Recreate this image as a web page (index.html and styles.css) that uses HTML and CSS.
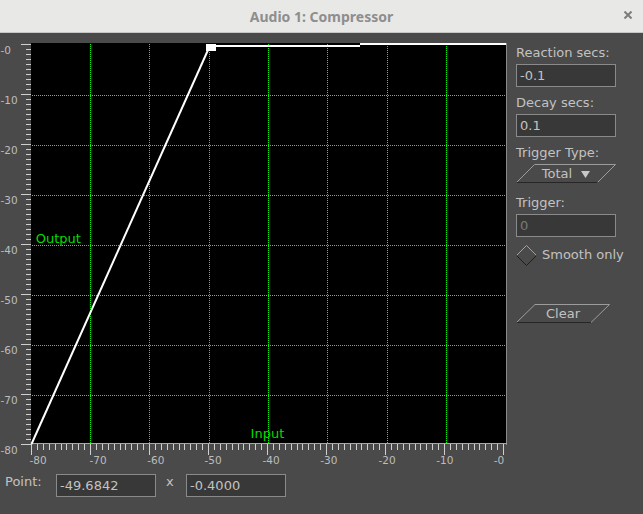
FILE: index.html
```html
<!DOCTYPE html>
<html>
<head>
<meta charset="utf-8">
<title>Audio 1: Compressor</title>
<link rel="stylesheet" href="styles.css">
</head>
<body>
<div class="titlebar">
  <div class="title">Audio 1: Compressor</div>
  <svg class="close" width="8" height="8" viewBox="0 0 8 8"><path d="M0.5 0.5L7.5 7.5M7.5 0.5L0.5 7.5" stroke="#7c7c7c" stroke-width="2"/></svg>
</div>
<div class="main">
  <svg class="plot" width="516" height="437" viewBox="0 33 516 437">
    <defs>
      <pattern id="hdot" x="0" y="0" width="2" height="1" patternUnits="userSpaceOnUse">
        <rect x="0" y="0" width="1" height="1" fill="#00ff00"/>
      </pattern>
      <pattern id="vdot" x="0" y="0" width="1" height="2" patternUnits="userSpaceOnUse">
        <rect x="0" y="0" width="1" height="1" fill="#00ff00"/>
      </pattern>
      <g id="xt">
        <path d="M0.5 444v11M6.4 444v5.5M12.3 444v5.5M18.2 444v5.5M24.1 444v5.5M30 444v5.5M35.9 444v5.5M41.8 444v5.5M47.7 444v5.5M53.6 444v5.5"/>
      </g>
      <g id="yt">
        <path d="M21 0.5h10M26 5.5h5M26 10.5h5M26 15.5h5M26 20.5h5M26 25.5h5M26 30.5h5M26 35.5h5M26 40.5h5M26 45.5h5"/>
      </g>
    </defs>
    <rect x="31" y="43" width="475" height="401" fill="#000"/>
    <g fill="url(#hdot)" shape-rendering="crispEdges">
      <rect x="31" y="95" width="475" height="1"/>
      <rect x="31" y="145" width="475" height="1"/>
      <rect x="31" y="195" width="475" height="1"/>
      <rect x="31" y="245" width="475" height="1"/>
      <rect x="31" y="295" width="475" height="1"/>
      <rect x="31" y="345" width="475" height="1"/>
      <rect x="31" y="395" width="475" height="1"/>
    </g>
    <g fill="url(#vdot)" shape-rendering="crispEdges">
      <rect x="90" y="43" width="1" height="401"/>
      <rect x="149" y="43" width="1" height="401"/>
      <rect x="209" y="43" width="1" height="401"/>
      <rect x="268" y="43" width="1" height="401"/>
      <rect x="327" y="43" width="1" height="401"/>
      <rect x="387" y="43" width="1" height="401"/>
      <rect x="446" y="43" width="1" height="401"/>
    </g>
    <path d="M506.5 43V444.5" stroke="#8a8a8a" shape-rendering="crispEdges"/>
    <path d="M31 443.5H507" stroke="#a8a8a8" shape-rendering="crispEdges"/>
    <g stroke="#cfcfcf" shape-rendering="crispEdges" fill="none">
      <use href="#xt" x="31"/>
      <use href="#xt" x="90"/>
      <use href="#xt" x="149"/>
      <use href="#xt" x="208"/>
      <use href="#xt" x="267"/>
      <use href="#xt" x="326"/>
      <use href="#xt" x="385"/>
      <use href="#xt" x="444"/>
      <path d="M503.5 444v11"/>
      <use href="#yt" y="44"/>
      <use href="#yt" y="94"/>
      <use href="#yt" y="144"/>
      <use href="#yt" y="194"/>
      <use href="#yt" y="244"/>
      <use href="#yt" y="294"/>
      <use href="#yt" y="344"/>
      <use href="#yt" y="394"/>
      <path d="M21 444.5h10"/>
    </g>
    <g class="axis-text">
      <text x="0.5" y="54">-0</text>
      <text x="0.5" y="104">-10</text>
      <text x="0.5" y="154">-20</text>
      <text x="0.5" y="204">-30</text>
      <text x="0.5" y="254">-40</text>
      <text x="0.5" y="304">-50</text>
      <text x="0.5" y="354">-60</text>
      <text x="0.5" y="404">-70</text>
      <text x="0.5" y="454">-80</text>
      <text x="29.5" y="464">-80</text>
      <text x="89.5" y="464">-70</text>
      <text x="147.2" y="464">-60</text>
      <text x="204.5" y="464">-50</text>
      <text x="262.5" y="464">-40</text>
      <text x="320.2" y="464">-30</text>
      <text x="378.5" y="464">-20</text>
      <text x="436.2" y="464">-10</text>
      <text x="493.8" y="464">-0</text>
    </g>
    <path d="M31.5 444L208 50" stroke="#fff" stroke-width="2"/>
    <rect x="206" y="44" width="10" height="7" fill="#fff"/>
    <rect x="216" y="45" width="144" height="2" fill="#fff"/>
    <rect x="360" y="43" width="146" height="2" fill="#fff"/>
    <text class="green-text" x="35.8" y="243">Output</text>
    <text class="green-text" x="250.6" y="438">Input</text>
  </svg>
  <div class="panel">
    <div class="label">Reaction secs:</div>
    <div class="field">-0.1</div>
    <div class="label gap8">Decay secs:</div>
    <div class="field">0.1</div>
    <div class="label gap8">Trigger Type:</div>
    <div class="pbtn pbtn-total">
      <svg class="pbtn-shape" width="100" height="19" viewBox="0 0 100 19"><path d="M0.5 18.5L18.5 0.5H99.5L81.5 18.5" stroke="#9c9c9c" fill="none"/><path d="M0.5 18.5H81.5" stroke="#262626"/></svg>
      <div class="pbtn-text">Total<svg class="arrow" width="9" height="7" viewBox="0 0 9 7"><path d="M0 0H9L4.5 7Z" fill="#c8c8c8"/></svg></div>
    </div>
    <div class="label gap12">Trigger:</div>
    <div class="field disabled">0</div>
    <div class="check">
      <svg width="21" height="21" viewBox="0 0 21 21"><path d="M0.5 10.5L10.5 0.5L20.5 10.5" stroke="#a2a2a2" fill="none"/><path d="M20.5 10.5L10.5 20.5L0.5 10.5" stroke="#1e1e1e" fill="none"/></svg>
      <span class="check-text">Smooth only</span>
    </div>
    <div class="pbtn pbtn-clear">
      <svg class="pbtn-shape" width="94" height="19" viewBox="0 0 94 19"><path d="M0.5 18.5L19 0.5H93.5L75 18.5" stroke="#9c9c9c" fill="none"/><path d="M0.5 18.5H75" stroke="#262626"/></svg>
      <div class="pbtn-text">Clear</div>
    </div>
  </div>
</div>
<div class="pointrow">
  <div class="plabel">Point:</div>
  <div class="field">-49.6842</div>
  <div class="sep">x</div>
  <div class="field">-0.4000</div>
</div>
</body>
</html>
```
FILE: styles.css
```css
html, body {
  margin: 0;
  padding: 0;
}
body {
  width: 643px;
  height: 514px;
  overflow: hidden;
  background: #4a4a4a;
  color: #c2c2c2;
  font-family: "DejaVu Sans", sans-serif;
  font-size: 13px;
}
.titlebar {
  height: 32px;
  border-bottom: 1px solid #c6c6c6;
  background: #e8e8e7;
  display: grid;
  grid-template-columns: 1fr auto 1fr;
  align-items: center;
}
.title {
  grid-column: 2;
  font-family: "Noto Sans", sans-serif;
  font-weight: 700;
  font-size: 14px;
  color: #8e8e8e;
}
.close {
  grid-column: 3;
  justify-self: end;
  align-self: start;
  margin-top: 11px;
  margin-right: 11px;
}
.main {
  display: flex;
}
.plot {
  display: block;
  flex: none;
}
.axis-text text {
  font-family: "DejaVu Sans", sans-serif;
  font-size: 10.5px;
  fill: #bdbdbd;
}
.green-text {
  font-family: "DejaVu Sans", sans-serif;
  font-size: 13px;
  fill: #00dd00;
}
.panel {
  padding-top: 12px;
  display: flex;
  flex-direction: column;
  align-items: flex-start;
}
.label {
  line-height: 15px;
  height: 15px;
}
.gap8 { margin-top: 8px; }
.gap12 { margin-top: 12px; }
.field {
  margin-top: 4px;
  width: 100px;
  height: 23px;
  box-sizing: border-box;
  border: 1px solid #8a8a8a;
  background: #383838;
  padding-left: 3px;
  line-height: 21px;
  white-space: nowrap;
}
.field.disabled {
  color: #787878;
}
.pbtn {
  display: grid;
  margin-top: 4px;
  height: 19px;
}
.pbtn-total { width: 100px; }
.pbtn-clear { width: 94px; margin-top: 38px; }
.pbtn-shape {
  grid-area: 1 / 1;
  display: block;
}
.pbtn-text {
  grid-area: 1 / 1;
  justify-self: center;
  line-height: 19px;
  display: flex;
  align-items: center;
  gap: 9px;
}
.arrow {
  display: block;
  margin-top: 1px;
}
.check {
  margin-top: 8px;
  display: flex;
  align-items: flex-start;
  gap: 5px;
  height: 21px;
}
.check svg {
  display: block;
}
.check-text {
  line-height: 19px;
}
.pointrow {
  margin-top: 4px;
  padding-left: 5px;
  display: flex;
  align-items: flex-start;
}
.pointrow .field {
  margin-top: 0;
}
.plabel {
  width: 51px;
  line-height: 15px;
}
.sep {
  margin-left: 10px;
  width: 20px;
  line-height: 15px;
}
```
